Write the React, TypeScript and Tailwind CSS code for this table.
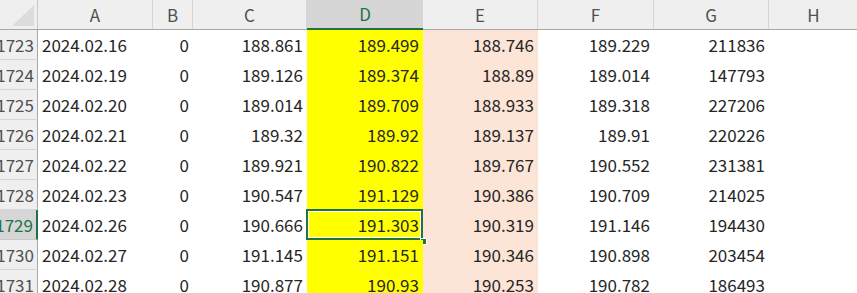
import React from "react";

type Row = {
  n: number;
  date: string;
  b: string;
  c: string;
  d: string;
  e: string;
  f: string;
  g: string;
};

const rows: Row[] = [
  { n: 1723, date: "2024.02.16", b: "0", c: "188.861", d: "189.499", e: "188.746", f: "189.229", g: "211836" },
  { n: 1724, date: "2024.02.19", b: "0", c: "189.126", d: "189.374", e: "188.89", f: "189.014", g: "147793" },
  { n: 1725, date: "2024.02.20", b: "0", c: "189.014", d: "189.709", e: "188.933", f: "189.318", g: "227206" },
  { n: 1726, date: "2024.02.21", b: "0", c: "189.32", d: "189.92", e: "189.137", f: "189.91", g: "220226" },
  { n: 1727, date: "2024.02.22", b: "0", c: "189.921", d: "190.822", e: "189.767", f: "190.552", g: "231381" },
  { n: 1728, date: "2024.02.23", b: "0", c: "190.547", d: "191.129", e: "190.386", f: "190.709", g: "214025" },
  { n: 1729, date: "2024.02.26", b: "0", c: "190.666", d: "191.303", e: "190.319", f: "191.146", g: "194430" },
  { n: 1730, date: "2024.02.27", b: "0", c: "191.145", d: "191.151", e: "190.346", f: "190.898", g: "203454" },
  { n: 1731, date: "2024.02.28", b: "0", c: "190.877", d: "190.93", e: "190.253", f: "190.782", g: "186493" },
];

const ACTIVE = 1729;

const font = { fontFamily: '"Noto Sans CJK JP", "Noto Sans", sans-serif' };

const App: React.FC = () => {
  return (
    <div
      className="w-[857px] h-[293px] overflow-hidden bg-white text-[17px] text-[#262626]"
      style={font}
    >
      {/* COLUMN HEADERS */}
      <div className="flex h-[30px] bg-[#efefef] border-b border-[#a8a8a8] text-[#505050]">
        <div className="relative w-[38px] shrink-0 border-r border-[#c8c8c8]">
          <svg className="absolute left-[12px] top-[5px]" width="22" height="21" viewBox="0 0 22 21">
            <polygon points="22,0 22,21 0,21" fill="#dcdcdc" />
          </svg>
        </div>
        <div className="w-[115px] shrink-0 flex items-center justify-center border-r border-[#d6d6d6]">A</div>
        <div className="w-[40px] shrink-0 flex items-center justify-center border-r border-[#d6d6d6]">B</div>
        <div className="w-[114px] shrink-0 flex items-center justify-center border-r border-[#d6d6d6]">C</div>
        <div className="w-[116px] shrink-0 flex items-center justify-center bg-[#d6d6d6] text-[#217346] border-b-2 border-[#217346] -mb-px">D</div>
        <div className="w-[115px] shrink-0 flex items-center justify-center border-r border-[#d6d6d6]">E</div>
        <div className="w-[116px] shrink-0 flex items-center justify-center border-r border-[#d6d6d6]">F</div>
        <div className="w-[115px] shrink-0 flex items-center justify-center border-r border-[#d6d6d6]">G</div>
        <div className="w-[89px] shrink-0 flex items-center justify-center">H</div>
      </div>

      {/* ROWS */}
      {rows.map((r) => {
        const active = r.n === ACTIVE;
        return (
          <div key={r.n} className="flex h-[30px]">
            <div
              className={
                active
                  ? "w-[38px] shrink-0 overflow-hidden flex items-center justify-end pr-[3px] bg-[#d6d6d6] text-[#217346] border-b border-[#c8c8c8] border-r-2 border-r-[#217346]"
                  : "w-[38px] shrink-0 overflow-hidden flex items-center justify-end pr-[3px] bg-[#efefef] text-[#505050] border-b border-[#d6d6d6] border-r border-r-[#a8a8a8]"
              }
            >
              <span className="whitespace-nowrap">{r.n}</span>
            </div>
            <div className="w-[115px] shrink-0 flex items-center pl-[4px]">{r.date}</div>
            <div className="w-[40px] shrink-0 flex items-center justify-end pr-[4px]">{r.b}</div>
            <div className="w-[114px] shrink-0 flex items-center justify-end pr-[4px]">{r.c}</div>
            <div className="relative w-[116px] shrink-0 flex items-center justify-end pr-[4px] bg-[#ffff00]">
              {r.d}
              {active && (
                <>
                  <div className="absolute -left-[1px] -top-[1px] w-[117px] h-[31px] border-2 border-[#217346]">
                    <div className="w-full h-full border border-white" />
                  </div>
                  <div className="absolute -right-[4px] bottom-[-5px] w-[7px] h-[7px] bg-[#217346] border border-white" />
                </>
              )}
            </div>
            <div className="w-[115px] shrink-0 flex items-center justify-end pr-[4px] bg-[#fce4d6]">{r.e}</div>
            <div className="w-[116px] shrink-0 flex items-center justify-end pr-[4px]">{r.f}</div>
            <div className="w-[115px] shrink-0 flex items-center justify-end pr-[4px]">{r.g}</div>
            <div className="w-[89px] shrink-0" />
          </div>
        );
      })}
    </div>
  );
};

export default App;
